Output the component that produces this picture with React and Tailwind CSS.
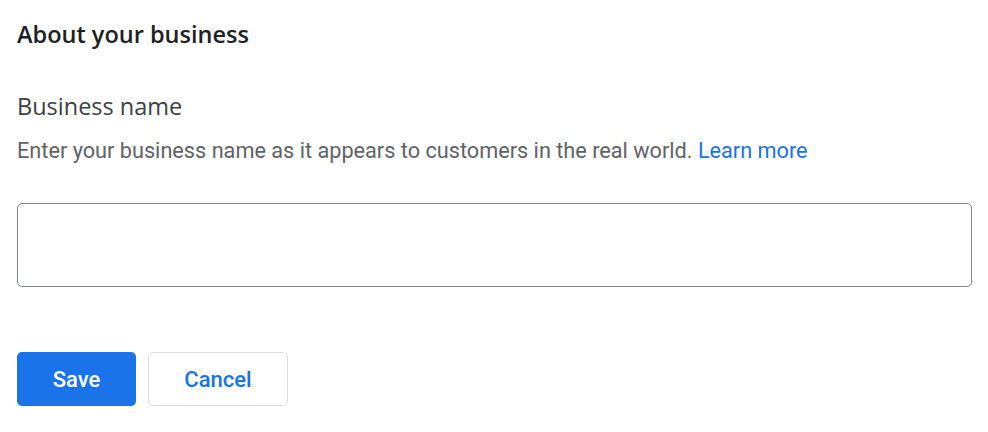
import React from 'react';

const App = () => {
  return (
    <div className="w-[988px] h-[432px] bg-white px-[17px] pt-[18px] font-['Roboto',sans-serif]">
      <h2 className="text-[23.5px] leading-[32px] font-semibold text-[#202124] font-['Open_Sans','Roboto',sans-serif]">About your business</h2>

      <h3 className="mt-[40px] text-[23.5px] leading-[32px] text-[#3c4043] font-['Open_Sans','Roboto',sans-serif]">Business name</h3>
      <p className="mt-[13px] text-[21.7px] leading-[32px] text-[#5f6368]">
        Enter your business name as it appears to customers in the real world.{' '}
        <a href="#" className="text-[#1a73e8]">Learn more</a>
      </p>

      <input
        type="text"
        className="mt-[36px] block w-[955px] h-[84px] rounded-[5px] border border-[#80868b] px-4 text-[18px] outline-none"
      />

      <div className="mt-[65px] flex gap-[12px]">
        <button className="w-[119px] h-[54px] rounded-[5px] bg-[#1a73e8] text-white text-[22px] font-medium">Save</button>
        <button className="w-[140px] h-[54px] rounded-[5px] border border-[#dadce0] bg-white text-[#1a73e8] text-[22px] font-medium">Cancel</button>
      </div>
    </div>
  );
};

export default App;
